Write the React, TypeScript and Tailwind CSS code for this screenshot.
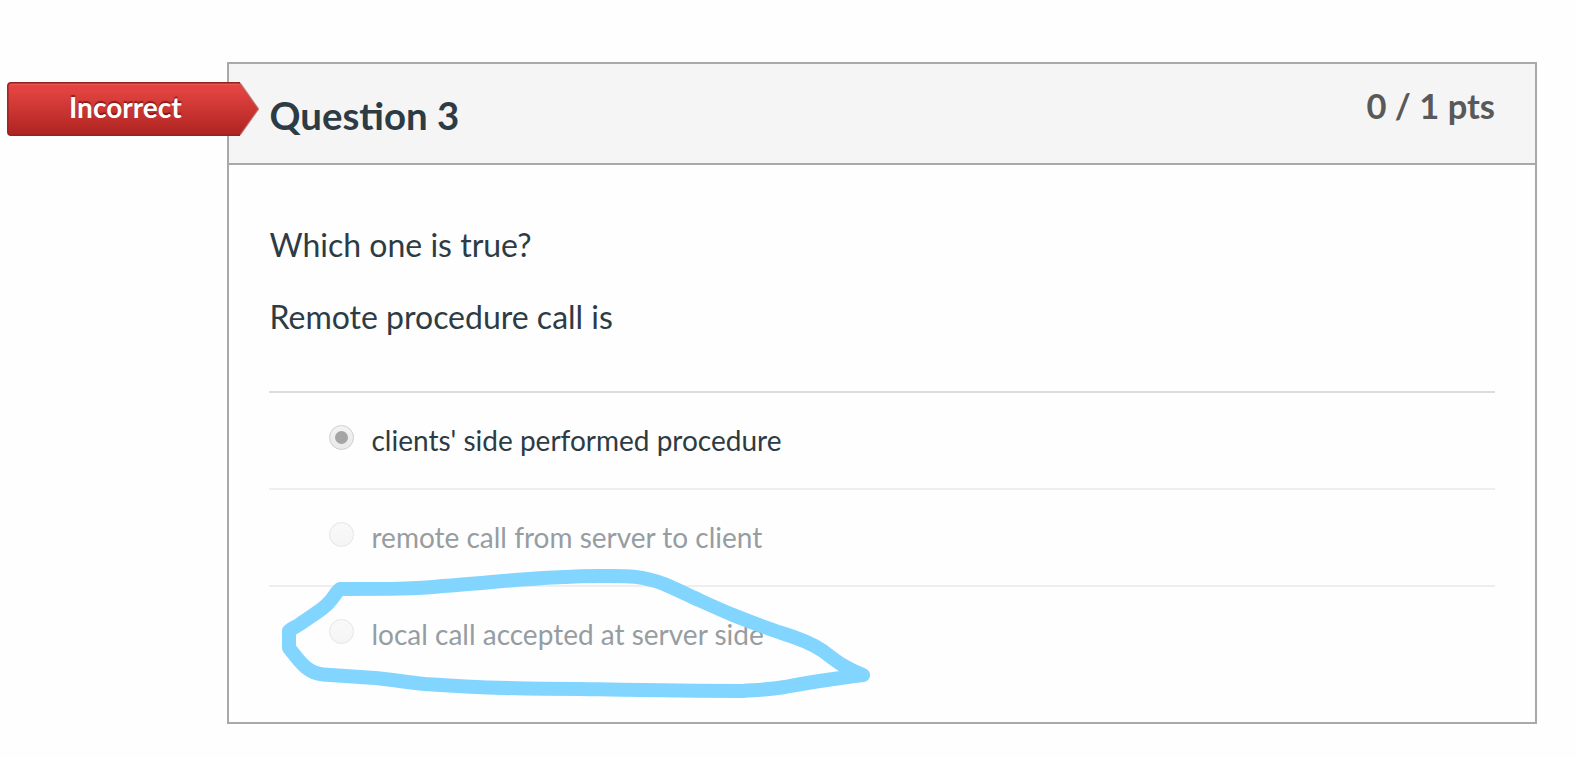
const answers = [
  { text: "clients' side performed procedure", selected: true },
  { text: "remote call from server to client", selected: false },
  { text: "local call accepted at server side", selected: false },
];

function Radio({ selected }: { selected: boolean }) {
  return (
    <span
      className={
        selected
          ? "mt-8 flex size-[25px] shrink-0 items-center justify-center rounded-full border border-[#cfcfcf] bg-linear-to-b from-[#f3f3f3] to-[#e9e9e9]"
          : "mt-8 flex size-[25px] shrink-0 items-center justify-center rounded-full border border-[#e6e6e6] bg-linear-to-b from-[#f9f9f9] to-[#f5f5f5]"
      }
    >
      {selected && <span className="size-[13px] rounded-full bg-[#a5a5a5]" />}
    </span>
  );
}

function IncorrectFlag() {
  return (
    <div className="absolute top-[18px] -left-[222px] h-[54px] w-[252px]">
      <svg className="absolute inset-0" width="252" height="54" viewBox="0 0 252 54">
        <defs>
          <linearGradient id="flag" x1="0" y1="0" x2="0" y2="1">
            <stop offset="0" stopColor="#e84542" />
            <stop offset="0.15" stopColor="#e14340" />
            <stop offset="1" stopColor="#ae2320" />
          </linearGradient>
        </defs>
        <path d="M4 .7H233L251.5 27L233 53.3H4Q.7 53.3 .7 50V4Q.7 .7 4 .7Z" fill="url(#flag)" />
        <path d="M233 1L251.5 27L233 53" fill="none" stroke="#b5645f" strokeOpacity=".7" strokeWidth="1.5" />
        <path d="M233 53.2H4Q.8 53.2 .8 50V4Q.8 .8 4 .8H233" fill="none" stroke="#942321" strokeWidth="1.5" />
        <path d="M4 2.5H232" stroke="#eb625f" strokeOpacity=".6" />
      </svg>
      <span className="absolute top-1 left-[62px] text-[28px] leading-[42px] font-bold text-white [text-shadow:0_-2px_1px_rgba(60,0,0,0.5)]">
        Incorrect
      </span>
    </div>
  );
}

function CircleMark() {
  return (
    <svg className="pointer-events-none absolute -bottom-[36px] left-[41px]" width="620" height="200" viewBox="270 558 620 200">
      <path
        d="M340 589C390 589 415 589 443 586C490 583 540 576 600 576C625 576 640 575 664 584C678 590 688 595 700 600.5C711 605.5 722 610.5 733 615C748 621 764 627 780 632.5C795 637 810 642 823 651C835 660 844 668 863 675C832 679 810 682 785 687C765 690 755 690 743 691C680 691 635 690 580 689C520 689 465 687 425 684C405 682 395 680 375 678L323 674.5C306 673 299 660 289 648V631C290 629 296 627 300 624L319 611C335 600 332 596 340 589Z"
        fill="none"
        stroke="#82d5ff"
        strokeWidth="14"
        strokeLinejoin="round"
      />
    </svg>
  );
}

export default function App() {
  return (
    <main className="h-[758px] w-full bg-[#fefefe] pt-[62px] pr-[39px] pl-[227px] font-['Lato',sans-serif] text-[#2d3b45]">
      <section className="relative flex h-[662px] flex-col border-2 border-[#a9a9a9]">
        <header className="flex h-[101px] shrink-0 items-start justify-between border-b-2 border-[#a9a9a9] bg-[#f5f5f5] px-10">
          <h2 className="pt-[21px] pl-[0.5px] text-[38.4px] leading-[60px] font-bold">Question 3</h2>
          <span className="pt-[15px] text-[34.5px] leading-[54px] font-bold text-[#595959]">0 / 1 pts</span>
        </header>
        <div className="px-10 pt-14">
          <div className="flex flex-col gap-6 pl-[0.5px] text-[32px] leading-[48px]">
            <p>Which one is true?</p>
            <p>Remote procedure call is</p>
          </div>
          <ul className="mt-[50px]">
            {answers.map((answer, index) => (
              <li
                key={answer.text}
                className={
                  index === 0
                    ? "flex h-[97px] gap-[17.5px] border-t-2 border-[#dddddd] pl-[60px]"
                    : "flex h-[97px] gap-[17.5px] border-t-2 border-[#eeeeee] pl-[60px]"
                }
              >
                <Radio selected={answer.selected} />
                <span
                  className={
                    answer.selected
                      ? "pt-[27px] text-[28px] leading-10"
                      : "pt-[27px] text-[28px] leading-10 text-[#969da2]"
                  }
                >
                  {answer.text}
                </span>
              </li>
            ))}
          </ul>
        </div>
        <IncorrectFlag />
        <CircleMark />
      </section>
    </main>
  );
}
